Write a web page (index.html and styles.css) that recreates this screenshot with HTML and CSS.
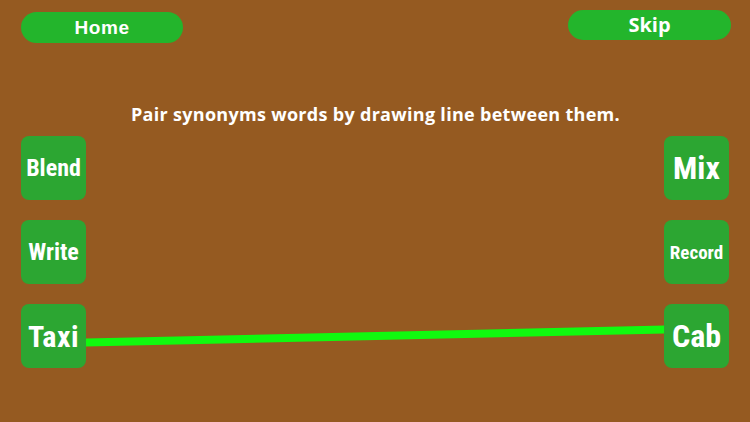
FILE: index.html
```html
<!DOCTYPE html>
<html>
<head>
<meta charset="utf-8">
<link rel="stylesheet" href="styles.css">
</head>
<body>
<div class="screen">
  <header class="topbar">
    <button class="pill pill-home">Home</button>
    <button class="pill pill-skip">Skip</button>
  </header>
  <p class="instruction">Pair synonyms words by drawing line between them.</p>
  <main class="board">
    <div class="column">
      <div class="card"><span class="w-blend">Blend</span></div>
      <div class="card"><span class="w-write">Write</span></div>
      <div class="card"><span class="w-taxi">Taxi</span></div>
    </div>
    <div class="column">
      <div class="card"><span class="w-mix">Mix</span></div>
      <div class="card"><span class="w-record">Record</span></div>
      <div class="card"><span class="w-cab">Cab</span></div>
    </div>
    <svg class="links" width="750" height="422" viewBox="0 0 750 422">
      <line x1="86" y1="342.5" x2="665" y2="329.5" stroke="#11f90f" stroke-width="8"/>
    </svg>
  </main>
</div>
</body>
</html>
```

FILE: styles.css
```css
html, body {
  margin: 0;
  padding: 0;
}
body {
  background: #955a21;
  width: 750px;
  height: 422px;
  overflow: hidden;
}
.screen {
  position: relative;
  width: 750px;
  height: 422px;
  display: flex;
  flex-direction: column;
}
.topbar {
  display: flex;
  justify-content: space-between;
  align-items: flex-start;
  padding: 10px 19px 0 21px;
}
.pill {
  border: none;
  background: #23b52c;
  color: #fff;
  border-radius: 16px;
  height: 31px;
  width: 162px;
  padding: 0;
  cursor: pointer;
}
.pill-home {
  margin-top: 2px;
  font-family: "Liberation Sans", Arial, sans-serif;
  font-weight: bold;
  font-size: 19px;
  letter-spacing: 0.6px;
  line-height: 31px;
}
.pill-skip {
  height: 30px;
  width: 163px;
  font-family: "Open Sans", sans-serif;
  font-weight: 700;
  font-size: 20px;
  line-height: 28px;
}
.instruction {
  margin: 60px 0 0 0;
  text-align: center;
  color: #fff;
  font-family: "Open Sans", sans-serif;
  font-weight: 700;
  font-size: 18px;
  letter-spacing: 0.3px;
  line-height: 22px;
  padding-left: 1px;
}
.board {
  display: flex;
  justify-content: space-between;
  padding: 11px 21px 0 21px;
}
.column {
  display: flex;
  flex-direction: column;
  gap: 20px;
  position: relative;
  z-index: 1;
}
.card {
  width: 65px;
  height: 64px;
  background: #2ca632;
  border-radius: 8px;
  display: flex;
  align-items: center;
  justify-content: center;
  color: #fff;
  font-family: "Roboto Condensed", "DejaVu Sans Condensed", sans-serif;
  font-weight: bold;
  white-space: nowrap;
}
.links {
  position: absolute;
  left: 0;
  top: 0;
  z-index: 0;
}
.w-blend { font-size: 24px; }
.w-write { font-size: 24px; }
.w-taxi { font-size: 30px; letter-spacing: 0.5px; }
.w-mix { font-size: 32px; }
.w-record { font-size: 19px; }
.w-cab { font-size: 32px; }
```
